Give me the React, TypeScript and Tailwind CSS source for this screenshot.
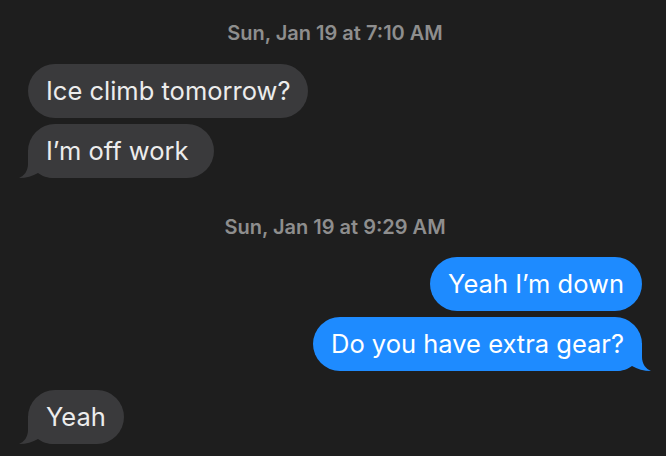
import React from 'react';

type Msg = { text: string; mine: boolean; tail?: boolean; gap?: string };

function Tail({ mine }: { mine: boolean }) {
  return (
    <svg
      width="40"
      height="28"
      viewBox="0 0 40 28"
      className={mine ? 'absolute -right-[9px] bottom-0 -scale-x-100' : 'absolute -left-[9px] bottom-0'}
    >
      <path
        d="M9 0 L9 14 C9 21 5 26 0 28 C7 28 14 26 19 23 C23 26 28 28 36 28 L40 28 L40 0 Z"
        fill={mine ? '#1e8bff' : '#3a3a3c'}
      />
    </svg>
  );
}

function Bubble({ m }: { m: Msg }) {
  return (
    <div className={`flex ${m.mine ? 'justify-end' : 'justify-start'} ${m.gap ?? 'mt-[6px]'}`}>
      <div
        className={`relative h-[54px] flex items-center px-[18px] rounded-[27px] text-[25.5px] leading-none whitespace-pre ${
          m.mine ? 'bg-[#1e8bff] text-white' : 'bg-[#3a3a3c] text-[#ececec]'
        }`}
      >
        {m.tail && <Tail mine={m.mine} />}
        <span className="relative">{m.text}</span>
      </div>
    </div>
  );
}

function Stamp({ day, time }: { day: string; time: string }) {
  return (
    <div className="text-center text-[20px] font-semibold text-[#8e8e8e] leading-[20px]">
      {day} at {time}
    </div>
  );
}

export default function App() {
  return (
    <div
      className="w-[666px] h-[456px] bg-[#1e1e1e] overflow-hidden pl-[28px] pr-[24px] pt-[23px]"
      style={{ fontFamily: 'Inter, "Noto Sans", sans-serif' }}
    >
      <Stamp day="Sun, Jan 19" time="7:10 AM" />
      <Bubble m={{ text: 'Ice climb tomorrow?', mine: false, gap: 'mt-[21px]' }} />
      <Bubble m={{ text: 'I’m off work ', mine: false, tail: true }} />
      <div className="mt-[39px]">
        <Stamp day="Sun, Jan 19" time="9:29 AM" />
      </div>
      <Bubble m={{ text: 'Yeah I’m down', mine: true, gap: 'mt-[20px]' }} />
      <Bubble m={{ text: 'Do you have extra gear?', mine: true, tail: true }} />
      <Bubble m={{ text: 'Yeah', mine: false, tail: true, gap: 'mt-[19px]' }} />
    </div>
  );
}
